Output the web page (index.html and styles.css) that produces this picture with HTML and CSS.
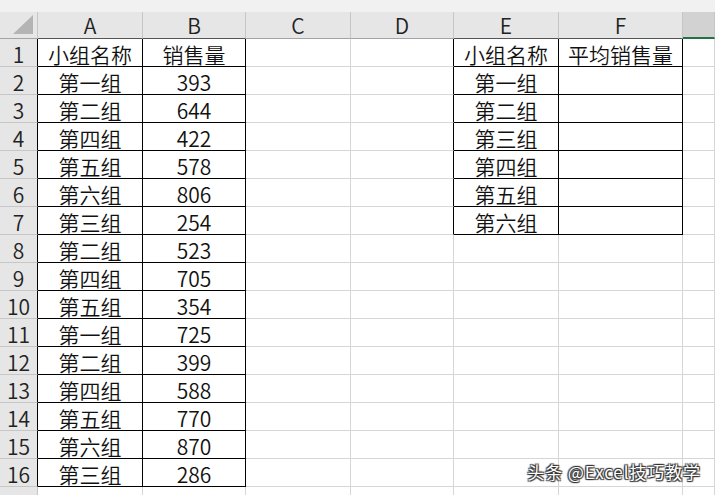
FILE: index.html
```html
<!DOCTYPE html>
<html lang="zh-CN">
<head>
<meta charset="utf-8">
<title>Excel</title>
<link rel="stylesheet" href="styles.css">
</head>
<body>
<div class="app">
  <div class="topband"></div>
  <div class="sheet">
    <!-- header row -->
    <div class="corner"><span class="tri"></span></div>
    <div class="h hb">A</div><div class="h hb">B</div><div class="h">C</div><div class="h">D</div><div class="h hb">E</div><div class="h hb">F</div><div class="h sel"></div>

    <div class="rh bl">1</div><div class="c bk">小组名称</div><div class="c bk">销售量</div><div class="c"></div><div class="c bl"></div><div class="c bk">小组名称</div><div class="c bk">平均销售量</div><div class="c"></div>
    <div class="rh bl">2</div><div class="c bk">第一组</div><div class="c bk">393</div><div class="c"></div><div class="c bl"></div><div class="c bk">第一组</div><div class="c bk"></div><div class="c"></div>
    <div class="rh bl">3</div><div class="c bk">第二组</div><div class="c bk">644</div><div class="c"></div><div class="c bl"></div><div class="c bk">第二组</div><div class="c bk"></div><div class="c"></div>
    <div class="rh bl">4</div><div class="c bk">第四组</div><div class="c bk">422</div><div class="c"></div><div class="c bl"></div><div class="c bk">第三组</div><div class="c bk"></div><div class="c"></div>
    <div class="rh bl">5</div><div class="c bk">第五组</div><div class="c bk">578</div><div class="c"></div><div class="c bl"></div><div class="c bk">第四组</div><div class="c bk"></div><div class="c"></div>
    <div class="rh bl">6</div><div class="c bk">第六组</div><div class="c bk">806</div><div class="c"></div><div class="c bl"></div><div class="c bk">第五组</div><div class="c bk"></div><div class="c"></div>
    <div class="rh bl">7</div><div class="c bk">第三组</div><div class="c bk">254</div><div class="c"></div><div class="c bl"></div><div class="c bk">第六组</div><div class="c bk"></div><div class="c"></div>
    <div class="rh bl">8</div><div class="c bk">第二组</div><div class="c bk">523</div><div class="c"></div><div class="c"></div><div class="c"></div><div class="c"></div><div class="c"></div>
    <div class="rh bl">9</div><div class="c bk">第四组</div><div class="c bk">705</div><div class="c"></div><div class="c"></div><div class="c"></div><div class="c"></div><div class="c"></div>
    <div class="rh bl">10</div><div class="c bk">第五组</div><div class="c bk">354</div><div class="c"></div><div class="c"></div><div class="c"></div><div class="c"></div><div class="c"></div>
    <div class="rh bl">11</div><div class="c bk">第一组</div><div class="c bk">725</div><div class="c"></div><div class="c"></div><div class="c"></div><div class="c"></div><div class="c"></div>
    <div class="rh bl">12</div><div class="c bk">第二组</div><div class="c bk">399</div><div class="c"></div><div class="c"></div><div class="c"></div><div class="c"></div><div class="c"></div>
    <div class="rh bl">13</div><div class="c bk">第四组</div><div class="c bk">588</div><div class="c"></div><div class="c"></div><div class="c"></div><div class="c"></div><div class="c"></div>
    <div class="rh bl">14</div><div class="c bk">第五组</div><div class="c bk">770</div><div class="c"></div><div class="c"></div><div class="c"></div><div class="c"></div><div class="c"></div>
    <div class="rh bl">15</div><div class="c bk">第六组</div><div class="c bk">870</div><div class="c"></div><div class="c"></div><div class="c"></div><div class="c"></div><div class="c"></div>
    <div class="rh bl">16</div><div class="c bk">第三组</div><div class="c bk">286</div><div class="c"></div><div class="c"></div><div class="c"></div><div class="c"></div><div class="c"></div>
    <div class="rh"></div><div class="c"></div><div class="c"></div><div class="c"></div><div class="c"></div><div class="c"></div><div class="c"></div><div class="c"></div>
  </div>
  <div class="watermark">头条 @Excel技巧教学</div>
</div>
</body>
</html>
```

FILE: styles.css
```css
* { box-sizing: border-box; }
html, body {
  margin: 0;
  padding: 0;
  background: #ffffff;
  overflow: hidden;
}
.app {
  position: relative;
  width: 715px;
  height: 495px;
  overflow: hidden;
  font-family: "Noto Sans CJK SC", "Noto Sans", sans-serif;
  font-weight: 350;
  color: #111;
}
.topband {
  height: 12px;
  background: #f1f1f1;
}
.sheet {
  display: grid;
  grid-template-columns: 38px 105px 103px 105px 103px 105px 124px 1fr;
  grid-template-rows: 27px repeat(17, 28px);
}
.corner {
  position: relative;
  background: #e6e6e6;
  border-right: 1px solid #c6c6c6;
  border-bottom: 1px solid #a3a3a3;
}
.tri {
  position: absolute;
  right: 4px;
  bottom: 4px;
  width: 0;
  height: 0;
  border-left: 20px solid transparent;
  border-bottom: 19px solid #b4b4b4;
}
.h {
  background: #e6e6e6;
  border-right: 1px solid #c6c6c6;
  border-bottom: 1px solid #a3a3a3;
  font-size: 21px;
  line-height: 26px;
  text-align: center;
  color: #222;
}
.h.hb { border-bottom-color: #555; }
.h.sel {
  background: #d2d2d2;
  border-bottom: 2px solid #217346;
}
.rh {
  background: #e6e6e6;
  border-right: 1px solid #c6c6c6;
  border-bottom: 1px solid #c6c6c6;
  font-size: 21px;
  line-height: 30px;
  text-align: center;
  color: #222;
}
.c {
  border-right: 1px solid #d6d6d6;
  border-bottom: 1px solid #d6d6d6;
  font-size: 21px;
  line-height: 30px;
  text-align: center;
  white-space: nowrap;
  overflow: visible;
}
.bk {
  border-right-color: #000;
  border-bottom-color: #000;
}
.bl {
  border-right-color: #000;
}
.watermark {
  position: absolute;
  right: 14px;
  bottom: 13px;
  font-size: 17px;
  font-weight: 400;
  letter-spacing: 0.9px;
  line-height: 20px;
  color: #fff;
  text-shadow: 0 0 1px #333, 1px 1px 1px #333, -1px -1px 1px #333, 1px -1px 1px #333, -1px 1px 1px #333;
}
```
